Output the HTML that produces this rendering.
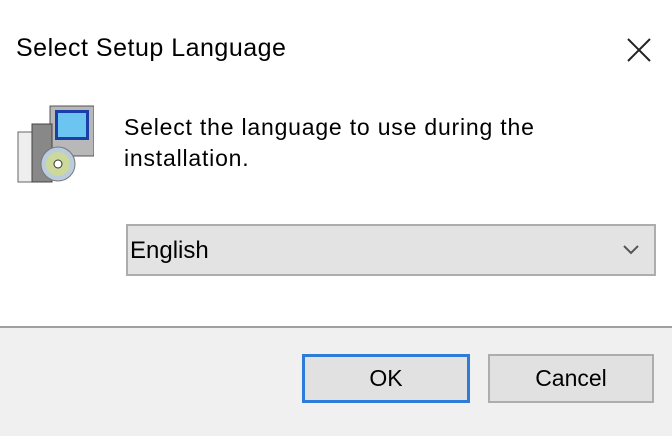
<!DOCTYPE html>
<html><head><meta charset="utf-8"><style>
html,body{margin:0;padding:0;}
body{width:672px;height:434px;position:relative;background:#fff;font-family:"Liberation Sans",sans-serif;overflow:hidden;color:#000;}
.t{position:absolute;white-space:nowrap;}
.foot{position:absolute;left:0;top:326px;width:672px;height:108px;background:#f0f0f0;border-top:2px solid #a0a0a0;}
.btn{position:absolute;top:354px;height:49px;background:#e1e1e1;border:2px solid #adadad;box-sizing:border-box;text-align:center;line-height:45px;font-size:23px;}
</style></head><body>
<div class="t" style="left:16px;top:34px;font-size:25px;letter-spacing:0.5px;">Select Setup Language</div>
<svg style="position:absolute;left:626px;top:37px" width="26" height="26" viewBox="0 0 26 26"><path d="M2 2L24 24M24 2L2 24" stroke="#222" stroke-width="2"/></svg>
<svg style="position:absolute;left:14px;top:102px" width="80" height="84" viewBox="0 0 80 84">
<rect x="36" y="4" width="44" height="50" fill="#b8b8b8" stroke="#555"/>
<rect x="41" y="8" width="34" height="30" fill="#1b3fa8"/>
<rect x="44" y="11" width="28" height="24" fill="#6cc4f0"/>
<rect x="4" y="30" width="26" height="50" fill="#eee" stroke="#666"/>
<rect x="18" y="22" width="20" height="58" fill="#888" stroke="#444"/>
<circle cx="44" cy="62" r="17" fill="#bcd" stroke="#777"/>
<circle cx="44" cy="62" r="12" fill="#d8e070" opacity=".6"/>
<circle cx="44" cy="62" r="4" fill="#fff" stroke="#333"/>
</svg>
<div class="t" style="left:124px;top:112px;font-size:23px;line-height:31px;letter-spacing:0.8px;">Select the language to use during the<br>installation.</div>
<div style="position:absolute;left:126px;top:224px;width:530px;height:52px;box-sizing:border-box;background:#e3e3e3;border:2px solid #adadad;"></div>
<div class="t" style="left:130px;top:237px;font-size:24px;">English</div>
<svg style="position:absolute;left:622px;top:244px" width="18" height="12" viewBox="0 0 18 12"><path d="M2 2L9 9L16 2" stroke="#555" stroke-width="2" fill="none"/></svg>
<div class="foot"></div>
<div class="btn" style="left:302px;width:168px;border:3px solid #2f7bd8;line-height:43px;">OK</div>
<div class="btn" style="left:488px;width:166px;">Cancel</div>
</body></html>
